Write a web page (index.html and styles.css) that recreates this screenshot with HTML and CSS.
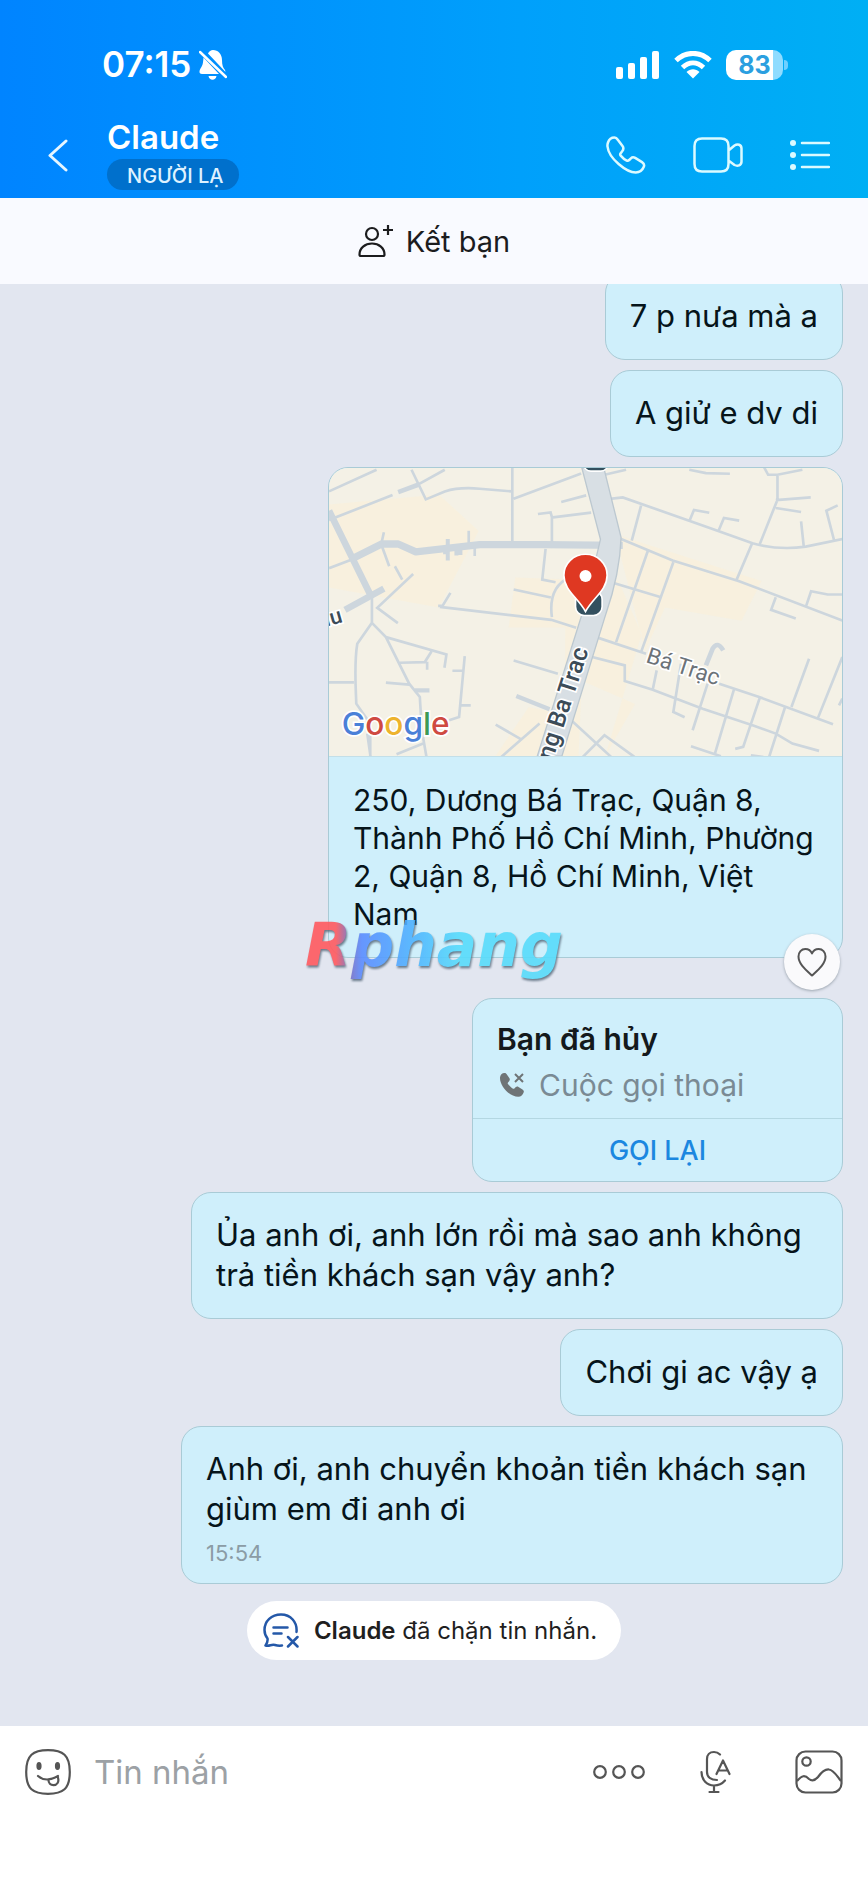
FILE: index.html
```html
<!DOCTYPE html>
<html lang="vi">
<head>
    <meta charset="UTF-8">
    <meta name="viewport" content="width=device-width, initial-scale=1.0">
    <title>Claude - Tin nhắn</title>
    <link rel="stylesheet" href="styles.css">
</head>
<body>
    <header class="header">
        <div class="status-bar">
            <span class="clock">07:15</span>
            <svg class="bell" width="28" height="30" viewBox="0 0 28 30" fill="#fff">
                <path d="M9 3.5C10 1.5 12 0 14 0c5 0 9 4 9 10 0 5 1 8 3 10l.5 2zM4.500 7.500C4 13 4 15 1.500 18.500 0 21 0 24 3 24h17z"/>
                <path d="M9.500 26h8c-.5 2.500-2 3.800-4 3.800s-3.500-1.300-4-3.800z"/>
                <path d="M1 2l26 25" stroke="#fff" stroke-width="2.500" stroke-linecap="round"/>
            </svg>
            <div class="status-icons">
                <svg width="44" height="28" viewBox="0 0 44 28" fill="#fff">
                    <rect x="0" y="16" width="7" height="12" rx="2"/>
                    <rect x="12" y="12" width="7" height="16" rx="2"/>
                    <rect x="24" y="6" width="7" height="22" rx="2"/>
                    <rect x="36" y="0" width="7" height="28" rx="2"/>
                </svg>
                <svg width="38" height="28" viewBox="0 0 38 28">
                    <path d="M2 9.500C12 0 26 0 36 9.500" fill="none" stroke="#fff" stroke-width="5"/>
                    <path d="M8.500 16.500C15 10.500 23 10.500 29.500 16.500" fill="none" stroke="#fff" stroke-width="5"/>
                    <path d="M12.500 21c4-3.600 9-3.600 13 0L19 27.500z" fill="#fff"/>
                </svg>
                <div class="battery"><span>83</span></div>
            </div>
        </div>
        <nav class="nav-bar">
            <button class="icon-btn back" aria-label="Quay lại">
                <svg width="20" height="33" viewBox="0 0 20 33" fill="none" stroke="#e6f6ff" stroke-width="3" stroke-linecap="round" stroke-linejoin="round"><path d="M18 2L2 16.500 18 31"/></svg>
            </button>
            <div class="contact">
                <h1>Claude</h1>
                <span class="tag">NGƯỜI LẠ</span>
            </div>
            <div class="nav-actions">
                <button class="icon-btn" aria-label="Gọi thoại">
                    <svg width="40" height="38" viewBox="0 0 40 38" fill="none" stroke="#dcfaff" stroke-width="2.500" stroke-linejoin="round"><path d="M2 6.500C3 3.500 5.500 1.500 8.500 1.500c1.500 0 2.500 1 3.500 2.500l4.500 6c1.500 2 1.200 3.500-.5 5.500l-1.500 2c-.5.700-.3 1.500.2 2.100 1.800 2.200 3.600 3.800 6 5 1 .4 1.700.2 2.500-.6l1.700-1.700c1.200-1.200 2.900-1.200 4.300-.4l6.800 4.200c2 1.300 2.600 2.800 1.800 4.700-1.300 3.300-4.300 5.700-8 5.700C20.500 36.500 2.700 22.500 1.500 10.500c-.2-1.500 0-2.600.5-4z"/></svg>
                </button>
                <button class="icon-btn" aria-label="Gọi video">
                    <svg width="50" height="36" viewBox="0 0 50 36" fill="none" stroke="#dcfaff" stroke-width="2.500" stroke-linejoin="round"><path d="M9 1.500h19c5 0 7.500 2.500 7.500 7.500v18c0 5-2.500 7.500-7.500 7.500H9c-5 0-7.500-2.500-7.500-7.500V9C1.500 4 4 1.500 9 1.500zM35.500 13.500l6-5c3-2 7-1 7 3v13c0 4-4 5-7 3.500l-6-4.500"/></svg>
                </button>
                <button class="icon-btn" aria-label="Tùy chọn">
                    <svg width="40" height="32" viewBox="0 0 40 32" fill="#dcfaff"><circle cx="3" cy="4" r="3"/><circle cx="3" cy="16" r="3"/><circle cx="3" cy="28" r="3"/><path d="M12 4h27M12 16h27M12 28h27" stroke="#dcfaff" stroke-width="2.500" stroke-linecap="round"/></svg>
                </button>
            </div>
        </nav>
    </header>

    <button class="add-friend">
        <svg width="36" height="34" viewBox="0 0 36 34" fill="none" stroke="#1c1c1e" stroke-width="2.200"><circle cx="14" cy="10" r="6"/><path d="M1.500 30.500C1.500 24 7 19.500 14 19.500s12.500 4.500 12.500 11c0 1-.5 1.500-1.500 1.500H3c-1 0-1.500-.5-1.500-1.500zM30 1v10M25 6h10"/></svg>
        Kết bạn
    </button>

    <main class="chat">
        <p class="bubble first">7 p nưa mà a</p>
        <p class="bubble">A giử e dv di</p>

        <div class="location">
            <svg class="map" viewBox="0 0 1542 867" preserveAspectRatio="xMidYMid slice">
                <rect width="1542" height="867" fill="#f4f1e6"/>
                <g fill="#f9f0dc">
                    <path d="M0 110L330 80 450 190 330 420 0 360zM540 480h170v260L600 720 500 867h330L940 500 870 340 560 330zM860 200l440 140-60 120-230-40-60 130zM760 640l160 70-90 157h-80z" opacity=".8"/>
                </g>
                <!-- west side streets -->
                <g transform="translate(-57 -51)" fill="none" stroke="#cdd6dd" stroke-width="8">
                    <path d="M57 122L200 57M305 57L348 146 405 122Q450 108 510 114L606 122M320 104L405 57M57 208L248 133M608 50V275M612 144L815 68M755 154l75-20M685 190l38-5 4 14V275M730 200l115-14"/>
                    <path d="M265 124l60-22" stroke-width="14"/>
                    <path d="M57 353L130 325M222 245l-8 36 24 66M255 347l22 40M310 370L202 472l62 46M186 435v82L142 580c-10 60-5 120-3 180l42 60 0 100M186 517l42 43 70 140 32 40 6 100 14 80M228 560l182 52-6 40M270 637l75-2 20-32M352 634v24M57 696h75M228 697l70 6M465 617L448 800l-30 10M428 661h30M455 765h28M172 850l10 70M340 880l-80 32"/>
                    <path d="M315 720h44M620 737l100 40" stroke-width="13"/>
                    <path d="M708 295l-10 92 40 8M780 380q-65 30-53 120M612 417l112 24M422 427L396 470 725 508 800 532M385 466h12M612 630L745 670M558 823l78 45M575 920L690 820M477 240v40M495 290v26"/>
                    <path d="M414 265v65M400 305h14M440 290v25M452 285v28" stroke-width="12"/>
                    <path d="M57 180L185 440M105 478L222 414" stroke-width="20"/>
                    <path d="M125 325L215 280h50L318 304 510 282H700L940 284" stroke-width="22" stroke-linejoin="round"/>
                </g>
                <!-- east side streets -->
                <g transform="translate(753 -51)" fill="none" stroke="#cdd6dd" stroke-width="8">
                    <path d="M75 72L140 57M85 145L130 140 400 235 520 278Q600 300 680 288L790 265M185 165L157 270M330 212l14-34 46 8M418 240l16-38 46 8M330 57l50 10 72 2M555 50l12 22h28L670 57M595 72v75L542 280M590 148l105-8M590 172l76 12M666 212l8 75M765 268L742 180l34-16M518 280L472 388"/>
                    <path d="M125 265L280 330 480 392 790 510M205 302L110 575M282 335L185 605M95 395L245 440M590 440l-14 38 74 26M680 470l16-48 50 10h44"/>
                    <path d="M50 560L200 610M420 700L540 740 762 822M32 618L136 645V692L220 718 370 775 520 825 590 850 640 880 720 902M232 660L220 718M305 640L282 785l34 16M385 700L340 840M465 715L407 910M542 742L492 890l-24 6M618 770L570 920M690 625L637 770M790 620L716 805M790 745l-10 20"/>
                    <path d="M380 645l20-50q15-25 32 5" stroke-width="14"/>
                    <path d="M-25 810L95 920M10 920L75 855 165 920M335 888l90 30M515 915l40 6" />
                </g>
                <!-- main road -->
                <path d="M760 0h66l52 210q-4 110-46 230L700 867h-74L770 410l46-195z" fill="#d8dfe4" stroke="#bcc8d0" stroke-width="4"/>
                <g fill="#33505f" stroke="#fff" stroke-width="5">
                    <rect x="765" y="-50" width="74" height="60" rx="22"/>
                    <rect x="741" y="370" width="80" height="74" rx="26"/>
                </g>
                <path d="M771 432C748 390 706 368 706 323a65 63 0 0 1 130 0c0 45-42 67-65 109z" fill="#df3822" stroke="#fff" stroke-width="5"/>
                <circle cx="771" cy="325" r="18" fill="#fff"/>
                <g class="map-label">
                    <text transform="translate(672 882) rotate(-72)" x="0" y="0" font-size="74">ng Ba Trac</text>
                    <text transform="translate(-8 478) rotate(-16)" x="0" y="0" font-size="66">iu</text>
                    <text class="minor" transform="translate(950 584) rotate(18)" x="0" y="0" font-size="68">Bá Trạc</text>
                </g>
                <text class="google" x="38" y="802"><tspan fill="#4a80d8">G</tspan><tspan fill="#cf4a42">o</tspan><tspan fill="#edb32e">o</tspan><tspan fill="#4a80d8">g</tspan><tspan fill="#3d9a55">l</tspan><tspan fill="#cf4a42">e</tspan></text>
            </svg>
            <p class="address">250, Dương Bá Trạc, Quận 8, Thành Phố Hồ Chí Minh, Phường 2, Quận 8, Hồ Chí Minh, Việt Nam</p>
            <span class="watermark">Rphang</span>
            <button class="like" aria-label="Thích">
                <svg width="30" height="30" viewBox="0 0 30 30" fill="none" stroke="#555" stroke-width="2" stroke-linejoin="round"><path d="M15 28.500C9 23 1.500 17 1.500 9.500 1.500 5 4.500 2 8.300 2c3 0 5.500 1.500 6.700 4.500C16.200 3.500 18.700 2 21.700 2c3.800 0 6.800 3 6.800 7.500C28.500 17 21 23 15 28.500z"/></svg>
            </button>
        </div>

        <div class="call">
            <h2>Bạn đã hủy</h2>
            <p class="call-type">
                <svg width="26" height="26" viewBox="0 0 26 26" fill="#6f7476"><path d="M1 5.500C1.200 3 3 1 5.500 1c1 0 1.600.5 2.200 1.300L10.300 6c.8 1.200.7 2.200-.2 3.200L9 10.500c-.4.500-.4 1 0 1.500 1.400 1.900 3 3.500 5 4.700.5.300 1 .2 1.400-.2l1.400-1.400c.8-.8 1.800-.8 2.700-.2l4 2.500c1.200.8 1.600 1.700 1.200 2.900-.8 2.700-2.700 4.500-5.400 4.500C10.500 24.800.5 14 1 5.500z"/><path d="M16 2l8 8M24 2l-8 8" stroke="#6f7476" stroke-width="2"/></svg>
                Cuộc gọi thoại
            </p>
            <button class="call-back">GỌI LẠI</button>
        </div>

        <p class="bubble narrow">Ủa anh ơi, anh lớn rồi mà sao anh không trả tiền khách sạn vậy anh?</p>
        <p class="bubble">Chơi gi ac vậy ạ</p>
        <div class="bubble last">
            Anh ơi, anh chuyển khoản tiền khách sạn giùm em đi anh ơi
            <time>15:54</time>
        </div>

        <p class="notice">
            <svg width="36" height="35" viewBox="0 0 36 35" fill="none" stroke="#2458a8" stroke-width="2.500" stroke-linecap="round" stroke-linejoin="round"><path d="M33.500 19c1-10-6-17.500-15.500-17.500S1.500 8 1.500 17c0 3.500 1 6 3 8.500.5 3-.5 5-2 7 4.500 1 5.500-1.500 9.500-.5 2 .6 4.500.8 7 .5M10.500 14.500h14M10.500 20.500h8M25 24l9.500 9.500M34.500 24L25 33.500"/></svg>
            <span><strong>Claude</strong> đã chặn tin nhắn.</span>
        </p>
    </main>

    <form class="composer">
        <button type="button" class="icon-btn" aria-label="Nhãn dán">
            <svg width="46" height="46" viewBox="0 0 46 46" fill="none" stroke="#555" stroke-width="2.200" stroke-linecap="round"><path d="M23 1.200C38 1.200 44.800 6 44.800 23S38 44.800 23 44.800 1.200 40 1.200 23 8 1.200 23 1.200z"/><ellipse cx="14" cy="17" rx="1.500" ry="3" fill="#555"/><ellipse cx="32.500" cy="17" rx="1.500" ry="3" fill="#555"/><path d="M13 27q8 7 20 0M23.500 31c0 3 2 5.200 5 5.200 3.500 0 6-3 4.300-8.200"/></svg>
        </button>
        <input type="text" placeholder="Tin nhắn" aria-label="Tin nhắn">
        <button type="button" class="icon-btn" aria-label="Thêm">
            <svg width="52" height="14" viewBox="0 0 52 14" fill="none" stroke="#555" stroke-width="2.200"><circle cx="7" cy="7" r="5.800"/><circle cx="26" cy="7" r="5.800"/><circle cx="45" cy="7" r="5.800"/></svg>
        </button>
        <button type="button" class="icon-btn mic" aria-label="Ghi âm">
            <svg width="31" height="44" viewBox="0 0 31 44" fill="none" stroke="#555" stroke-width="2.200" stroke-linecap="round" stroke-linejoin="round"><path d="M20 4.500Q17.500 2 14 2C9.500 2 7 5 7 9v13c0 5 4 8 10 8M1.500 22c0 8 5.500 13.500 12.500 13.500 4.500 0 8-1.500 11-5M14 35.500V42M9.500 42h9M16.500 24L23 10.500 29.500 24M19 20.500h8.500"/></svg>
        </button>
        <button type="button" class="icon-btn" aria-label="Hình ảnh">
            <svg width="48" height="44" viewBox="0 0 48 44" fill="none" stroke="#555" stroke-width="2.200"><rect x="1.500" y="1.500" width="45" height="41" rx="9"/><circle cx="11.500" cy="11.500" r="4.200"/><path d="M2 31c5-6 8-6 12-2 3 2.500 6 1.500 9-2 4-5.500 7-8 11-7.500 5 .5 8 7 12 11.500"/></svg>
        </button>
    </form>
</body>
</html>
```

FILE: styles.css
```css
* { box-sizing: border-box; }
body { margin: 0; min-height: 100vh; display: flex; flex-direction: column; font-family: Inter, "Noto Sans", sans-serif; color: #06141a; background-color: #fff; }
h1, h2, p { margin: 0; }
button { font-family: inherit; border: none; background: none; padding: 0; cursor: pointer; }
svg { display: block; flex-shrink: 0; }

/* header */
.header { height: 198px; padding-top: 42px; background: linear-gradient(90deg, #0084ff, #00a0fb 60%, #00aff4); color: #fff; }
.status-bar { display: flex; align-items: center; height: 45px; padding: 0 85px 0 102px; }
.clock { font-size: 35px; font-weight: 600; line-height: 45px; }
.bell { margin-left: 8px; }
.status-icons { display: flex; align-items: center; gap: 14px; margin-left: auto; }
.battery { position: relative; width: 57px; height: 30px; border-radius: 10px; background: linear-gradient(90deg, #fff 83%, #8fdcff 83%); color: #2b9fe0; font-size: 25px; font-weight: 700; line-height: 30px; text-align: center; }
.battery::after { content: ""; position: absolute; left: 58px; top: 10px; width: 4px; height: 10px; border-radius: 0 5px 5px 0; background-color: #6fd0ff; }
.nav-bar { display: flex; align-items: center; height: 104px; padding: 32px 38px 0 48px; }
.icon-btn { display: flex; align-items: center; justify-content: center; }
.contact { flex: 1; display: flex; flex-direction: column; align-items: flex-start; margin: -32px 0 0 39px; padding-top: 30px; }
.contact h1 { margin-bottom: 4px; font-size: 33px; font-weight: 600; line-height: 36px; }
.tag { padding: 3px 16px 0 20px; border-radius: 16px; background-color: #0070cc; color: #dff2ff; font-size: 20px; font-weight: 500; line-height: 28px; }
.nav-actions { display: flex; align-items: center; gap: 47px; }

.add-friend { display: flex; align-items: center; justify-content: center; gap: 12px; height: 86px; background-color: #f9faff; color: #1c1c1e; font-size: 29px; }

/* messages */
.chat { flex: 1; display: flex; flex-direction: column; align-items: flex-end; gap: 10px; padding: 0 25px; overflow: hidden; background-color: #e2e6f0; }
.bubble, .location, .call { border: 1px solid #a9cbd6; border-radius: 20px; background-color: #cfeffb; }
.bubble { max-width: 662px; padding: 22px 24px 23px; font-size: 31px; line-height: 40px; }
.narrow { max-width: 652px; }
.first { margin-top: -11px; }
.last { padding-bottom: 18px; }
.last time { display: block; margin-top: 12px; color: #8b9ca5; font-size: 22px; line-height: 24px; }

.location { position: relative; width: 515px; margin-bottom: 30px; }
.map { width: 100%; height: 289px; border-bottom: 1px solid #c3dfe8; border-radius: 19px 19px 0 0; }
.map-label { fill: #3c4c58; font-family: Roboto, sans-serif; font-weight: 500; paint-order: stroke; stroke: #fff; stroke-width: 10px; }
.map-label .minor { fill: #6b7278; font-weight: 400; }
.google { font-family: Inter, sans-serif; font-size: 95px; font-weight: 500; paint-order: stroke; stroke: #fff; stroke-width: 10px; }
.address { padding: 24px; font-size: 30px; line-height: 38px; }
.watermark { position: absolute; left: -24px; bottom: -26px; font-family: "DejaVu Sans", sans-serif; font-size: 60px; font-weight: 700; font-style: italic; line-height: 76px; color: transparent; background: linear-gradient(90deg, #ff5a5f 12%, #7d6fc0 17%, #5b8dff 22%, #4fb4ff 42%, #58dcfb 60%); background-clip: text; -webkit-background-clip: text; filter: drop-shadow(1px 2px 1px #5d6f80); opacity: .9; }
.like { position: absolute; right: 2px; bottom: -33px; display: flex; align-items: center; justify-content: center; width: 56px; height: 56px; border-radius: 50%; background-color: #fafafc; box-shadow: 0 1px 3px #9aa3ad; }

.call { width: 371px; padding-top: 20px; }
.call h2 { padding: 0 24px; color: #14191c; font-size: 30px; font-weight: 600; line-height: 40px; }
.call-type { display: flex; align-items: center; gap: 14px; margin-top: 6px; padding: 0 24px 13px 26px; color: #7a8a94; font-size: 30px; line-height: 40px; }
.call-back { width: 100%; height: 63px; border-top: 1px solid #b4d7e2; color: #1b87e0; font-size: 27px; font-weight: 500; }

.notice { display: flex; align-items: center; align-self: center; gap: 15px; height: 59px; margin-top: 7px; padding: 0 24px 0 16px; border-radius: 30px; background-color: #fff; color: #1f1f1f; font-size: 24px; }
.notice strong { font-weight: 600; }

/* input row */
.composer { display: flex; align-items: flex-start; min-height: 161px; padding: 22px 25px 0; background-color: #fff; }
.composer .icon-btn { height: 48px; }
.composer input { flex: 1; min-width: 0; height: 48px; margin: 0 20px 0 23px; padding: 0; border: none; outline: none; font-family: inherit; font-size: 33px; }
.composer input::placeholder { color: #9ca1a5; opacity: 1; }
.mic { margin: 0 64px 0 55px; }
```
